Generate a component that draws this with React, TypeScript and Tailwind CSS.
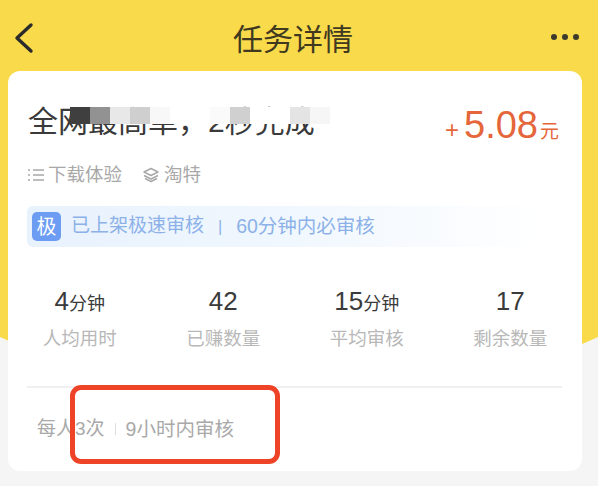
import React from "react";

const font = { fontFamily: '"Liberation Sans", "Noto Sans CJK SC", sans-serif' };

const stats = [
  { value: "4", unit: "分钟", label: "人均用时" },
  { value: "42", unit: "", label: "已赚数量" },
  { value: "15", unit: "分钟", label: "平均审核" },
  { value: "17", unit: "", label: "剩余数量" },
];

const mosaic = [
  "bg-[#3f3f3f]",
  "bg-[#929292]",
  "bg-[#e8e8e8]",
  "bg-[#cfcfcf]",
  "bg-[#f8f8f8]",
  "bg-white",
  "bg-white",
  "bg-[#fafafa]",
  "bg-[#d0d0d0]",
  "bg-white",
  "bg-white",
  "bg-[#e4e4e4]",
  "bg-[#f6f6f6]",
];

export default function App() {
  return (
    <div style={font} className="relative w-[598px] h-[486px] overflow-hidden bg-[#f5f5f5]">
      <div className="absolute left-[-421px] top-[-1038px] w-[1440px] h-[1440px] rounded-full bg-[#f8da4b]" />

      <div className="relative flex flex-col pl-2 pr-4">
        <header className="h-[71px] flex items-center justify-between pl-[3px] pt-[5px] pr-0 mr-[-14px]">
          <svg width="28" height="34" viewBox="0 0 28 34" fill="none" stroke="#2b2b2b" strokeWidth="3.4" strokeLinecap="round" strokeLinejoin="round">
            <path d="M20 4 L6 17 L20 30" />
          </svg>
          <h1 className="text-[30px] leading-none font-normal text-[#40391f] mt-[4px] mr-[4px]">任务详情</h1>
          <div className="flex gap-[5px] w-[30px] mr-[15px] mt-[-2px]">
            <span className="shrink-0 w-[6px] h-[6px] rounded-full bg-[#3d3a2c]" />
            <span className="shrink-0 w-[6px] h-[6px] rounded-full bg-[#3d3a2c]" />
            <span className="shrink-0 w-[6px] h-[6px] rounded-full bg-[#3d3a2c]" />
          </div>
        </header>

        <main className="relative h-[400px] rounded-xl bg-white pt-[33px]">
          <div className="flex items-start justify-between pl-5 pr-[23px]">
            <div className="relative text-[30px] leading-[36px] text-[#3a3a3a] whitespace-nowrap">全网最高单，2秒完成</div>
            <div className="flex items-baseline mt-[1px] text-[#e5663a] whitespace-nowrap">
              <span className="text-[24px] leading-[40px] mr-[5px]">+</span>
              <span className="text-[38px] leading-[40px]">5.08</span>
              <span className="text-[19px] leading-[40px] ml-[2px]">元</span>
            </div>
          </div>

          <div className="absolute left-[62px] top-[36px] flex h-[17px]">
            {mosaic.map((c, i) => (
              <span key={i} className={`w-5 h-[17px] ${c}`} />
            ))}
          </div>

          <div className="flex items-center mt-[11px] pl-5 text-[18.5px] leading-[24px] text-[#a8a8a8]">
            <svg width="17" height="14" viewBox="0 0 17 14" fill="none" stroke="#a8a8a8" strokeWidth="1.5" className="mr-[3px]">
              <path d="M0 2h2M0 7h2M0 12h2M5 2h11M5 7h11M5 12h11" />
            </svg>
            <span>下载体验</span>
            <svg width="16" height="16" viewBox="0 0 16 16" fill="none" stroke="#a8a8a8" strokeWidth="1.5" strokeLinejoin="round" className="ml-[21px] mr-[5px]">
              <path d="M8 1.5 L15 5 L8 8.5 L1 5 Z" />
              <path d="M1 8.5 L8 12 L15 8.5" />
              <path d="M2 11.5 L8 14.5 L14 11.5" />
            </svg>
            <span>淘特</span>
          </div>

          <div className="flex items-center h-[41px] mt-[19px] ml-[19px] mr-[37px] pl-[5px] rounded-md bg-gradient-to-r from-[#e8f2fd] via-[#f0f7fe] to-white text-[19px] text-[#8cb1e8] whitespace-nowrap">
            <span className="flex items-center justify-center w-[29px] h-[29px] rounded-[5px] bg-[#6d9df2] text-white text-[20px] leading-none">极</span>
            <span className="ml-[10px]">已上架极速审核</span>
            <span className="mx-[14px] text-[16px]">|</span>
            <span className="text-[19.5px]">60分钟内必审核</span>
          </div>

          <div className="grid grid-cols-4 mt-[38px] text-center">
            {stats.map((s) => (
              <div key={s.label} className="flex flex-col items-center">
                <div className="flex items-baseline h-[32px] text-[#3a3a3a] leading-[32px]">
                  <span className="text-[26px]">{s.value}</span>
                  {s.unit && <span className="text-[18px]">{s.unit}</span>}
                </div>
                <div className="mt-[10px] text-[18.5px] leading-[24px] text-[#b8b8b8]">{s.label}</div>
              </div>
            ))}
          </div>

          <div className="mt-[35px] ml-[19px] mr-5 h-[2px] bg-[#f0f0f0]" />

          <div className="flex items-center mt-[29px] pl-[29px] text-[19px] leading-[24px] text-[#a9a9a9] whitespace-nowrap">
            <span>每人3次</span>
            <span className="w-px h-3 bg-[#dddddd] mx-[10px]" />
            <span className="text-[19.5px]">9小时内审核</span>
          </div>
        </main>
      </div>

      <div className="absolute left-[70px] top-[385px] w-[210px] h-[79px] rounded-[11px] border-[5px] border-[#ee4327]" />
    </div>
  );
}
